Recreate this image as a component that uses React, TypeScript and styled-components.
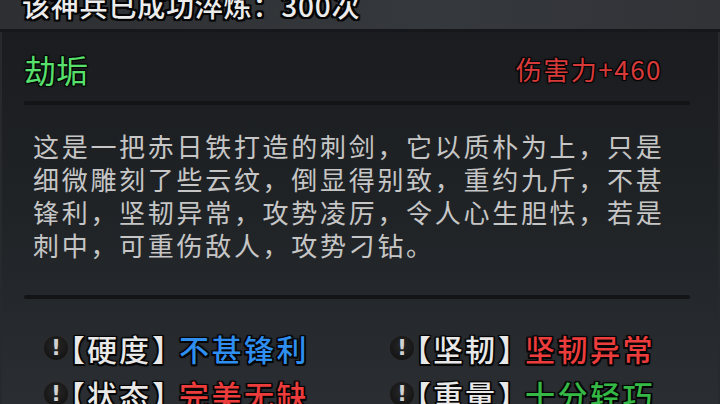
import styled, { createGlobalStyle, css } from "styled-components";

type Tone = "white" | "blue" | "red" | "green";

const TONES: Record<Tone, string> = {
  white: "#e8e8e8",
  blue: "#2f8ff0",
  red: "#ec3c3c",
  green: "#35b846",
};

const outline = (w: number) => css`
  text-shadow: -${w}px -${w}px 0 #050505, ${w}px -${w}px 0 #050505,
    -${w}px ${w}px 0 #050505, ${w}px ${w}px 0 #050505, 0 ${w}px 0 #050505,
    0 -${w}px 0 #050505, ${w}px 0 0 #050505, -${w}px 0 0 #050505,
    0 0 3px #000;
`;

const GlobalStyle = createGlobalStyle`
  html, body {
    margin: 0;
    padding: 0;
    background: #1e2023;
    overflow: hidden;
  }
  body {
    font-family: "Noto Sans CJK SC", "Noto Sans", sans-serif;
  }
`;

const Frame = styled.div`
  width: 720px;
  height: 404px;
  overflow: hidden;
  display: flex;
  flex-direction: column;
`;

const TopBar = styled.div`
  height: 32px;
  flex-shrink: 0;
  display: flex;
  align-items: flex-end;
  padding: 0 0 10px 22px;
  box-sizing: border-box;
  overflow: hidden;
  background: linear-gradient(90deg, #2d2f32 0%, #35383c 60%, #313337 100%);
  border-bottom: 3px solid #16171a;
`;

const TopText = styled.div`
  font-size: 28px;
  line-height: 28px;
  font-weight: 500;
  letter-spacing: 0.8px;
  color: #ececec;
  white-space: nowrap;
  ${outline(2)}
`;

const Panel = styled.div`
  flex: 1;
  display: flex;
  flex-direction: column;
  padding: 0 28px 0 22px;
  background: linear-gradient(180deg, #1a1c1f 0%, #202326 45%, #2b2e32 100%);
  border-left: 2px solid #27292c;
  border-right: 2px solid #27292c;
  box-sizing: border-box;
`;

const Header = styled.div`
  margin-top: 18px;
  height: 38px;
  display: flex;
  align-items: center;
  justify-content: space-between;
  padding-right: 28px;
`;

const Title = styled.div`
  font-size: 32px;
  line-height: 38px;
  color: #58e06c;
  ${outline(1)}
`;

const Damage = styled.div`
  font-size: 26px;
  line-height: 38px;
  color: #d83a3a;
  letter-spacing: 1.5px;
  ${outline(1)}
`;

const Divider = styled.div<{ $gap: number }>`
  margin-top: ${(p) => p.$gap}px;
  height: 4px;
  border-radius: 2px;
  background: #121416;
  flex-shrink: 0;
`;

const Description = styled.p`
  margin: 24px 0 0;
  padding: 0 0 0 9px;
  font-size: 26px;
  line-height: 33px;
  letter-spacing: 2.7px;
  color: #c6c6c6;
`;

const Stats = styled.div`
  margin-top: 26px;
  padding-left: 20px;
  display: grid;
  grid-template-columns: 346px 1fr;
  grid-auto-rows: 46px;
`;

const Stat = styled.div`
  display: flex;
  align-items: center;
  white-space: nowrap;
`;

const Hint = styled.span`
  width: 24px;
  height: 24px;
  flex-shrink: 0;
  border-radius: 50%;
  background: radial-gradient(circle at 50% 40%, #272727 0%, #131313 80%);
  box-shadow: 0 0 0 1px #2c2c2c;
  color: #d2d2d2;
  font-family: "DejaVu Sans", sans-serif;
  font-weight: bold;
  font-size: 21px;
  line-height: 24px;
  text-align: center;
`;

const Label = styled.span`
  margin-left: 2px;
  font-size: 30px;
  line-height: 46px;
  font-weight: 500;
  letter-spacing: 2px;
  font-feature-settings: "halt";
  color: ${TONES.white};
  ${outline(1.5)}
`;

const Name = styled.span`
  margin-right: 1px;
`;

const Value = styled.span<{ $tone: Tone }>`
  margin-left: 10px;
  font-size: 30px;
  line-height: 46px;
  font-weight: 500;
  letter-spacing: 2.5px;
  color: ${(p) => TONES[p.$tone]};
  ${outline(1.5)}
`;

const stats: { label: string; value: string; tone: Tone }[] = [
  { label: "硬度", value: "不甚锋利", tone: "blue" },
  { label: "坚韧", value: "坚韧异常", tone: "red" },
  { label: "状态", value: "完美无缺", tone: "red" },
  { label: "重量", value: "十分轻巧", tone: "green" },
];

export default function App() {
  return (
    <>
      <GlobalStyle />
      <Frame>
        <TopBar>
          <TopText>该神兵已成功淬炼：300次</TopText>
        </TopBar>
        <Panel>
          <Header>
            <Title>劫垢</Title>
            <Damage>伤害力+460</Damage>
          </Header>
          <Divider $gap={13} />
          <Description>
            这是一把赤日铁打造的刺剑，它以质朴为上，只是细微雕刻了些云纹，倒显得别致，重约九斤，不甚锋利，坚韧异常，攻势凌厉，令人心生胆怯，若是刺中，可重伤敌人，攻势刁钻。
          </Description>
          <Divider $gap={34} />
          <Stats>
            {stats.map((s) => (
              <Stat key={s.label}>
                <Hint>!</Hint>
                <Label>
                  【<Name>{s.label}</Name>】
                </Label>
                <Value $tone={s.tone}>{s.value}</Value>
              </Stat>
            ))}
          </Stats>
        </Panel>
      </Frame>
    </>
  );
}
